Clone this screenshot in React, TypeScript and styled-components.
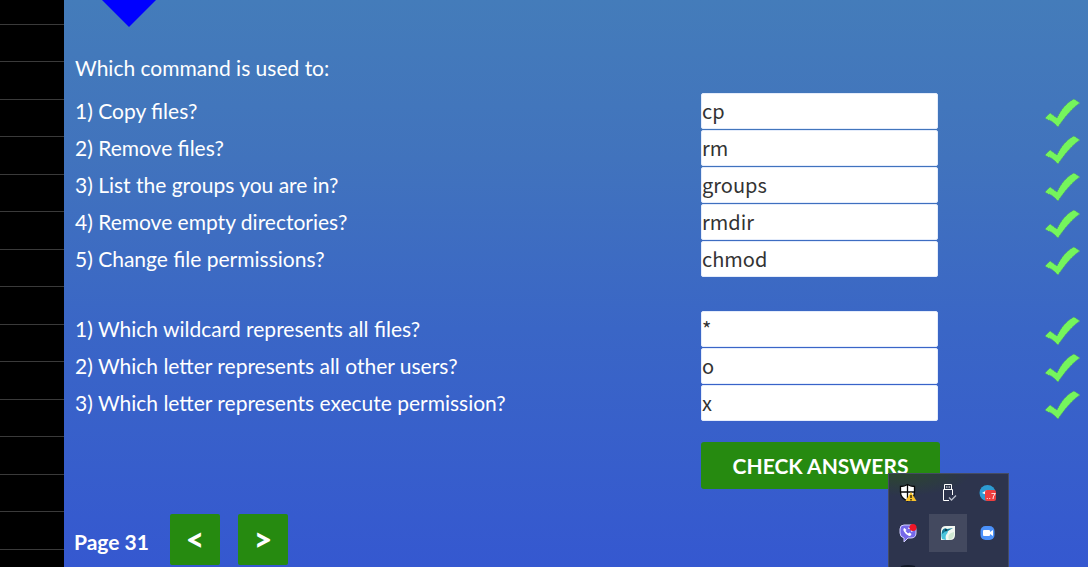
import React from "react";
import styled, { createGlobalStyle } from "styled-components";

const GlobalStyle = createGlobalStyle`
  * { box-sizing: border-box; }
  html, body { margin: 0; height: 100%; }
  #root { height: 100%; }
  body {
    overflow: hidden;
    background: #000;
    color: #fff;
    font: 21px/37px Lato, "Open Sans", sans-serif;
  }
`;

const Page = styled.div`
  display: grid;
  grid-template-columns: 64px minmax(0, 1fr);
  min-height: 100vh;
`;

const Ruling = styled.aside`
  background-color: #000;
  background-image: linear-gradient(
    to bottom,
    transparent 24px, #3a3a3a 24px, #3a3a3a 25px,
    transparent 25px, transparent 61px,
    #3a3a3a 61px, #3a3a3a 62px, transparent 62px
  );
  background-size: 100% 75px;
`;

const Lesson = styled.main`
  display: flex;
  flex-direction: column;
  background: linear-gradient(#447cba 0%, #4173bd 28%, #3a66c6 58%, #3558d0 100%);
`;

const Pointer = styled.svg`
  display: block;
  width: 54px;
  height: 27px;
  margin-left: 38px;
`;

const Prompt = styled.h1`
  margin: 23px 0 6px 11px;
  font-size: 21px;
  line-height: 36px;
  font-weight: 400;
`;

const Quiz = styled.form`
  display: flex;
  flex-direction: column;
`;

const Group = styled.div`
  margin-bottom: 33px;

  & + & { margin-bottom: 21px; }
`;

const Row = styled.div`
  display: grid;
  grid-template-columns: minmax(0, 626fr) minmax(0, 387fr);
  align-items: center;
  height: 37px;
  padding-left: 11px;
`;

const Reply = styled.div`
  display: flex;
  align-items: center;
  justify-content: space-between;
  padding-right: 8px;
`;

const Answer = styled.input`
  width: 237px;
  height: 36px;
  padding: 0;
  border: 1px solid #e4ecfb;
  border-radius: 2px;
  background: #fff;
  color: #333;
  font: 20px "Noto Sans CJK SC", "Noto Sans", sans-serif;
`;

const Tick = styled.svg`
  flex: none;
  width: 36px;
  height: 30px;
  margin-top: 5px;
`;

const Actions = styled.div`
  display: grid;
  grid-template-columns: minmax(0, 626fr) minmax(0, 387fr);
  padding-left: 11px;
`;

const CheckButton = styled.button`
  grid-column: 2;
  width: 239px;
  height: 47px;
  padding: 0;
  border: 0;
  border-radius: 3px;
  background: #268a10;
  color: #fff;
  font: 700 21px Lato, sans-serif;
`;

const Pager = styled.nav`
  display: flex;
  align-items: center;
  gap: 18px;
  margin: 25px 0 0 10px;
`;

const PageLabel = styled.strong`
  width: 78px;
  padding-top: 3px;
  font-weight: 700;
  white-space: nowrap;
`;

const PageButton = styled.button`
  width: 50px;
  height: 51px;
  padding: 0 0 2px;
  border: 0;
  border-radius: 2px;
  background: #268a10;
  color: #fff;
  font: 900 32px Lato, sans-serif;
`;

const Tray = styled.div`
  position: fixed;
  right: 79px;
  bottom: 0;
  display: grid;
  grid-template-columns: repeat(3, 38px);
  grid-auto-rows: 38px;
  gap: 2px;
  width: 121px;
  height: 94px;
  overflow: hidden;
  border: 1px solid #454c63;
  border-bottom: 0;
  background: radial-gradient(ellipse 70px 22px at 12px 0, #2c4630, #2d344d);
`;

const TrayButton = styled.button<{ $active?: boolean }>`
  display: grid;
  place-items: center;
  padding: 0;
  border: 0;
  background: ${(p) => (p.$active ? "#43495f" : "transparent")};

  svg { display: block; width: 18px; height: 18px; overflow: visible; }
`;

const commands = [
  ["Copy files?", "cp"],
  ["Remove files?", "rm"],
  ["List the groups you are in?", "groups"],
  ["Remove empty directories?", "rmdir"],
  ["Change file permissions?", "chmod"],
];

const symbols = [
  ["Which wildcard represents all files?", "*"],
  ["Which letter represents all other users?", "o"],
  ["Which letter represents execute permission?", "x"],
];

function Questions({ name, items }: { name: string; items: string[][] }) {
  return (
    <Group>
      {items.map(([question, answer], i) => (
        <Row key={question}>
          <label htmlFor={`${name}-${i}`}>{`${i + 1}) ${question}`}</label>
          <Reply>
            <Answer id={`${name}-${i}`} defaultValue={answer} spellCheck={false} />
            <Tick viewBox="0 0 36 30" role="img" aria-label="Correct">
              <path
                d="M1 20 L6 15 L13 20 C17 12 22 5 30 1 L36 5 C28 10 21 19 14 29 C10 25 7 22 4 22Z"
                fill="#75f55c"
                stroke="#4c9a72"
                strokeWidth="1"
                strokeDasharray="1 1"
              />
            </Tick>
          </Reply>
        </Row>
      ))}
    </Group>
  );
}

export default function App() {
  return (
    <>
      <GlobalStyle />
      <Page>
        <Ruling />
        <Lesson>
          <Pointer viewBox="0 0 54 27" aria-hidden="true">
            <path d="M0 0H54L27 27Z" fill="#00f" />
          </Pointer>
          <Prompt>Which command is used to:</Prompt>
          <Quiz onSubmit={(e) => e.preventDefault()}>
            <Questions name="command" items={commands} />
            <Questions name="symbol" items={symbols} />
            <Actions>
              <CheckButton type="submit">CHECK ANSWERS</CheckButton>
            </Actions>
          </Quiz>
          <Pager aria-label="Pages">
            <PageLabel>Page 31</PageLabel>
            <PageButton type="button" aria-label="Previous page">&lt;</PageButton>
            <PageButton type="button" aria-label="Next page">&gt;</PageButton>
          </Pager>
        </Lesson>
      </Page>
      <Tray>
        <TrayButton aria-label="Security">
          <svg viewBox="0 0 18 18">
            <path d="M8.500 .5C6.500 2 4 2.500 1.500 2.500V8C1.500 12 4 15 8.500 17C13 15 15.500 12 15.500 8V2.500C13 2.500 10.500 2 8.500 .5Z" fill="#fff" stroke="#080808" strokeWidth="1.300" />
            <path d="M8.500 1V16M2 8H15" stroke="#080808" strokeWidth="1.300" />
            <path d="M12 8L17.500 17H6.500Z" fill="#f9c32b" />
            <path d="M12 11V14M12 15V16.500" stroke="#332a10" strokeWidth="1.500" />
          </svg>
        </TrayButton>
        <TrayButton aria-label="USB device">
          <svg viewBox="0 0 18 18" fill="none" stroke="#fff">
            <path d="M5.500 5.500V.5H12.500V5.500M4.500 5.500H13.500V11M4.500 5.500V16.500H10" />
            <path d="M7 3H8.500M9.500 3H11" />
            <path d="M10 13.500L12.500 16L17 11.500" stroke="#b9becb" strokeWidth="1.300" />
          </svg>
        </TrayButton>
        <TrayButton aria-label="Messages">
          <svg viewBox="0 0 18 18">
            <circle cx="8.500" cy="9" r="8" fill="#2d9bd2" />
            <path d="M3 9L8 6V11Z" fill="#fff" />
            <rect x="6" y="6" width="11" height="11" rx="2" fill="#ee3e3e" />
            <text x="7" y="15" fontFamily="Liberation Sans, sans-serif" fontSize="9" fill="#fff">..7</text>
          </svg>
        </TrayButton>
        <TrayButton aria-label="Calls">
          <svg viewBox="0 0 18 18">
            <path d="M5 1H12Q17 1 17 6V9Q17 14 12 14H9L5 18V14Q1 13 1 9V5Q1 1 5 1Z" fill="#7568e8" stroke="#d4d0ff" />
            <path d="M5.500 4Q3.500 5 5 7.500Q7 11 10 12Q12 12.500 12.500 10L10.500 8.500L9 9.500L6.500 7L7.500 6Z" fill="#fff" />
            <path d="M9 4Q13 4 13 8" fill="none" stroke="#fff" />
            <circle cx="14" cy="3.500" r="3.500" fill="#f01627" />
          </svg>
        </TrayButton>
        <TrayButton $active aria-label="Bird utility">
          <svg viewBox="0 0 18 18">
            <path d="M2 16V7Q2 2 7 2H16V11Q16 16 11 16Z" fill="#f3f8f1" />
            <path d="M3 15Q1 9 4 6Q8 3 9 7Q9 9 7 11Q6 13 7 16Z" fill="#48c4dc" />
            <path d="M3 7Q5 3 8 5L14 4L9 7Q6 7 3 10Z" fill="#167b98" />
            <path d="M10 16Q8 11 12 9L15 8V11Q14 15 10 16Z" fill="#d0e8d2" />
            <circle cx="7" cy="6" r="1" fill="#102b39" />
          </svg>
        </TrayButton>
        <TrayButton aria-label="Video meeting">
          <svg viewBox="0 0 18 18">
            <rect x="1.500" y="2" width="14" height="14" rx="5" fill="#4b91fa" />
            <rect x="4" y="6" width="7" height="6" rx="1" fill="#fff" />
            <path d="M11 8L14 6V12L11 10Z" fill="#fff" />
          </svg>
        </TrayButton>
        <TrayButton aria-label="More">
          <svg viewBox="0 0 18 18">
            <path d="M2 3Q9 1 16 3" fill="none" stroke="#111827" strokeWidth="2" />
          </svg>
        </TrayButton>
      </Tray>
    </>
  );
}
